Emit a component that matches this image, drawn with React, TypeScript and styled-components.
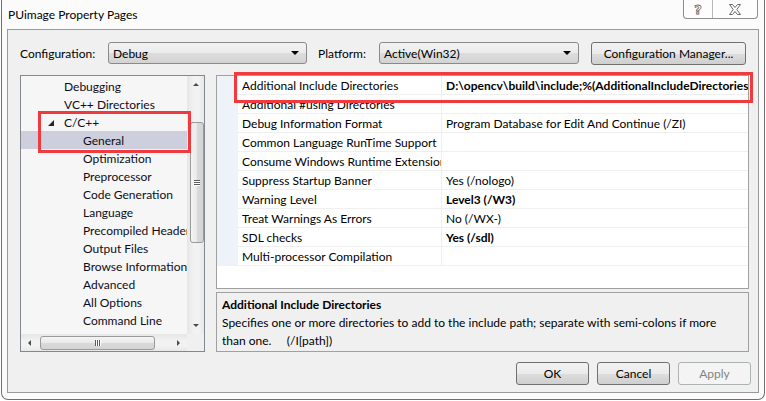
import React from 'react';
import styled, { createGlobalStyle } from 'styled-components';

const Global = createGlobalStyle`
  html, body { margin: 0; padding: 0; background: #ffffff; }
  body {
    width: 766px; height: 401px; overflow: hidden;
    font-family: "Segoe UI", Lato, "Open Sans", sans-serif;
    font-size: 12px; color: #000;
  }
  * { box-sizing: border-box; }
`;

const Stage = styled.div`
  position: relative;
  width: 766px;
  height: 401px;
  padding: 0 1px;
`;

const Frame = styled.div`
  height: 400px;
  background: #fbfbfb;
  border: 1px solid #6f6f6f;
  border-top: none;
  border-radius: 0 0 7px 7px;
  display: flex;
  flex-direction: column;
  padding: 0 5px 6px 5px;
`;

const TitleBar = styled.div`
  height: 29px;
  display: flex;
  align-items: center;
  padding: 0 0 0 1px;
  font-size: 12px;
  color: #000;
`;

const CaptionButtons = styled.div`
  position: absolute;
  top: 0;
  right: 8px;
  height: 19px;
  display: flex;
  border: 1px solid #8e8e8e;
  border-top: none;
  border-radius: 0 0 4px 4px;
  background: #fdfdfd;
`;

const CaptionButton = styled.div<{ $w: number; $sep?: boolean }>`
  width: ${p => p.$w}px;
  height: 100%;
  display: flex;
  align-items: center;
  justify-content: center;
  border-left: ${p => (p.$sep ? '1px solid #b8b8b8' : 'none')};
`;

const HelpGlyph = styled.span`
  font-family: "DejaVu Sans", sans-serif;
  font-size: 13px;
  font-weight: bold;
  color: #ffffff;
  -webkit-text-stroke: 0.8px #6a6a6a;
  line-height: 1;
`;

const Client = styled.div`
  flex: 1;
  border: 1px solid #9a9a9a;
  background: #f0f0f0;
  padding: 12px 8px 0 12px;
  display: flex;
  flex-direction: column;
`;

const ConfigRow = styled.div`
  display: flex;
  align-items: center;
  height: 22px;
`;

const Label = styled.span<{ $w: number; $ml?: number }>`
  width: ${p => p.$w}px;
  margin-left: ${p => p.$ml ?? 0}px;
  white-space: nowrap;
`;

const Combo = styled.div<{ $w: number }>`
  width: ${p => p.$w}px;
  height: 22px;
  border: 1px solid #8a8a8a;
  border-radius: 3px;
  background: linear-gradient(#f3f3f3 0%, #ebebeb 50%, #dddddd 51%, #d3d3d3 100%);
  display: flex;
  align-items: center;
  justify-content: space-between;
  padding: 0 7px 0 4px;
`;

const ComboArrow = styled.span`
  width: 0;
  height: 0;
  border-left: 4px solid transparent;
  border-right: 4px solid transparent;
  border-top: 4px solid #000;
`;

const PushButton = styled.div<{ $w: number; $ml?: number; $disabled?: boolean }>`
  width: ${p => p.$w}px;
  margin-left: ${p => p.$ml ?? 0}px;
  height: 23px;
  border: 1px solid ${p => (p.$disabled ? '#adb2b5' : '#707070')};
  border-radius: 3px;
  background: ${p =>
    p.$disabled
      ? '#f4f4f4'
      : 'linear-gradient(#f2f2f2 0%, #ebebeb 50%, #dddddd 51%, #cfcfcf 100%)'};
  color: ${p => (p.$disabled ? '#838383' : '#000')};
  display: flex;
  align-items: center;
  justify-content: center;
  white-space: nowrap;
`;

const Main = styled.div`
  margin-top: 11px;
  display: flex;
  gap: 11px;
  height: 277px;
`;

const Tree = styled.div`
  width: 185px;
  border: 1px solid #828790;
  background: #f6f6f6;
  display: grid;
  grid-template-columns: 1fr 17px;
  grid-template-rows: 1fr 17px;
`;

const TreeList = styled.div`
  overflow: hidden;
  padding-top: 1px;
`;

const TreeItem = styled.div<{ $level: number; $selected?: boolean }>`
  height: 18px;
  display: flex;
  align-items: center;
  padding-left: ${p => (p.$level === 0 ? 43 : 62)}px;
  background: ${p => (p.$selected ? '#cdd0dc' : 'transparent')};
  color: #0d0d1a;
  white-space: nowrap;
  position: relative;
`;

const Expander = styled.span`
  position: absolute;
  left: 27px;
  top: 7px;
  width: 0;
  height: 0;
  border-left: 6px solid transparent;
  border-bottom: 6px solid #262626;
`;

const VScroll = styled.div`
  background: linear-gradient(90deg, #e6e6e6, #f2f2f2 40%, #f2f2f2 70%, #e8e8e8);
  display: flex;
  flex-direction: column;
  align-items: center;
`;

const HScroll = styled.div`
  background: linear-gradient(#e6e6e6, #f2f2f2 40%, #f2f2f2 70%, #e8e8e8);
  display: flex;
  align-items: center;
`;

const Corner = styled.div`
  background: #f0f0f0;
`;

const ArrowBox = styled.div`
  width: 17px;
  height: 17px;
  display: flex;
  align-items: center;
  justify-content: center;
  flex: none;
`;

const Tri = styled.span<{ $dir: 'up' | 'down' | 'left' | 'right' }>`
  width: 0;
  height: 0;
  ${p =>
    p.$dir === 'up'
      ? 'border-left:3px solid transparent;border-right:3px solid transparent;border-bottom:3px solid #4a4a4a;'
      : p.$dir === 'down'
      ? 'border-left:3px solid transparent;border-right:3px solid transparent;border-top:3px solid #4a4a4a;'
      : p.$dir === 'left'
      ? 'border-top:3px solid transparent;border-bottom:3px solid transparent;border-right:3px solid #4a4a4a;'
      : 'border-top:3px solid transparent;border-bottom:3px solid transparent;border-left:3px solid #4a4a4a;'}
`;

const VThumb = styled.div`
  margin-top: 29px;
  width: 14px;
  height: 121px;
  margin-left: 2px;
  border: 1px solid #9a9a9a;
  border-radius: 3px;
  background: linear-gradient(90deg, #f4f4f4, #e9e9e9 50%, #d9d9d9 51%, #d4d4d4);
  display: flex;
  align-items: center;
  justify-content: center;
`;

const VSpacer = styled.div`
  flex: 1;
`;

const HThumb = styled.div`
  margin-left: 2px;
  width: 115px;
  height: 14px;
  border: 1px solid #9a9a9a;
  border-radius: 3px;
  background: linear-gradient(#f4f4f4, #e9e9e9 50%, #d9d9d9 51%, #d4d4d4);
  display: flex;
  align-items: center;
  justify-content: center;
`;

const Grip = styled.div<{ $vertical?: boolean }>`
  display: flex;
  flex-direction: ${p => (p.$vertical ? 'column' : 'row')};
  gap: 1px;
  & > span {
    display: block;
    background: #5a5a5a;
    width: ${p => (p.$vertical ? '6px' : '1px')};
    height: ${p => (p.$vertical ? '1px' : '6px')};
    box-shadow: ${p => (p.$vertical ? '0 1px 0 #fff' : '1px 0 0 #fff')};
  }
`;

const RightCol = styled.div`
  width: 533px;
  display: flex;
  flex-direction: column;
  gap: 3px;
`;

const Grid = styled.div`
  height: 214px;
  border: 1px solid #a0a0a0;
  background: #ffffff;
  overflow: hidden;
`;

const Row = styled.div`
  display: grid;
  grid-template-columns: 21px 204px 1fr;
  height: 19px;
`;

const Gutter = styled.div`
  background: #eef3fa;
`;

const Cell = styled.div<{ $bold?: boolean; $sep?: boolean }>`
  border-bottom: 1px solid #efefef;
  border-right: ${p => (p.$sep ? '1px solid #efefef' : 'none')};
  padding-left: 4px;
  display: flex;
  align-items: center;
  white-space: nowrap;
  overflow: hidden;
  font-weight: ${p => (p.$bold ? 'bold' : 'normal')};
  color: #000;
`;

const Description = styled.div`
  height: 60px;
  border: 1px solid #a0a0a0;
  background: #f0f0f0;
  padding: 3px 5px;
  line-height: 18px;
`;

const DescTitle = styled.div`
  font-weight: bold;
`;

const DescText = styled.div`
  white-space: pre-wrap;
`;

const ButtonRow = styled.div`
  margin-top: 10px;
  display: flex;
  justify-content: flex-end;
  gap: 8px;
  padding-right: 0;
  margin-right: -1px;
`;

const Highlight = styled.div<{ $x: number; $y: number; $w: number; $h: number }>`
  position: absolute;
  left: ${p => p.$x}px;
  top: ${p => p.$y}px;
  width: ${p => p.$w}px;
  height: ${p => p.$h}px;
  border: 3px solid #f03a3d;
  pointer-events: none;
`;

const treeItems: { label: string; level: number; selected?: boolean; expander?: boolean }[] = [
  { label: 'Debugging', level: 0 },
  { label: 'VC++ Directories', level: 0 },
  { label: 'C/C++', level: 0, expander: true },
  { label: 'General', level: 1, selected: true },
  { label: 'Optimization', level: 1 },
  { label: 'Preprocessor', level: 1 },
  { label: 'Code Generation', level: 1 },
  { label: 'Language', level: 1 },
  { label: 'Precompiled Headers', level: 1 },
  { label: 'Output Files', level: 1 },
  { label: 'Browse Information', level: 1 },
  { label: 'Advanced', level: 1 },
  { label: 'All Options', level: 1 },
  { label: 'Command Line', level: 1 },
];

const props: { name: string; value: string; bold?: boolean }[] = [
  { name: 'Additional Include Directories', value: 'D:\\opencv\\build\\include;%(AdditionalIncludeDirectories)', bold: true },
  { name: 'Additional #using Directories', value: '' },
  { name: 'Debug Information Format', value: 'Program Database for Edit And Continue (/ZI)' },
  { name: 'Common Language RunTime Support', value: '' },
  { name: 'Consume Windows Runtime Extension', value: '' },
  { name: 'Suppress Startup Banner', value: 'Yes (/nologo)' },
  { name: 'Warning Level', value: 'Level3 (/W3)', bold: true },
  { name: 'Treat Warnings As Errors', value: 'No (/WX-)' },
  { name: 'SDL checks', value: 'Yes (/sdl)', bold: true },
  { name: 'Multi-processor Compilation', value: '' },
];

export default function App() {
  return (
    <Stage>
      <Global />
      <Frame>
        <TitleBar>PUimage Property Pages</TitleBar>
        <Client>
          <ConfigRow>
            <Label $w={88}>Configuration:</Label>
            <Combo $w={199}>
              <span>Debug</span>
              <ComboArrow />
            </Combo>
            <Label $w={61} $ml={11}>Platform:</Label>
            <Combo $w={200}>
              <span>Active(Win32)</span>
              <ComboArrow />
            </Combo>
            <PushButton $w={155} $ml={12}>Configuration Manager...</PushButton>
          </ConfigRow>
          <Main>
            <Tree>
              <TreeList>
                {treeItems.map(it => (
                  <TreeItem key={it.label} $level={it.level} $selected={it.selected}>
                    {it.expander && <Expander />}
                    {it.label}
                  </TreeItem>
                ))}
              </TreeList>
              <VScroll>
                <ArrowBox><Tri $dir="up" /></ArrowBox>
                <VThumb>
                  <Grip $vertical>
                    <span /><span /><span />
                  </Grip>
                </VThumb>
                <VSpacer />
                <ArrowBox><Tri $dir="down" /></ArrowBox>
              </VScroll>
              <HScroll>
                <ArrowBox><Tri $dir="left" /></ArrowBox>
                <HThumb>
                  <Grip>
                    <span /><span /><span />
                  </Grip>
                </HThumb>
                <VSpacer />
                <ArrowBox><Tri $dir="right" /></ArrowBox>
              </HScroll>
              <Corner />
            </Tree>
            <RightCol>
              <Grid>
                {props.map(p => (
                  <Row key={p.name}>
                    <Gutter />
                    <Cell $sep>{p.name}</Cell>
                    <Cell $bold={p.bold}>{p.value}</Cell>
                  </Row>
                ))}
              </Grid>
              <Description>
                <DescTitle>Additional Include Directories</DescTitle>
                <DescText>{'Specifies one or more directories to add to the include path; separate with semi-colons if more\nthan one.     (/I[path])'}</DescText>
              </Description>
            </RightCol>
          </Main>
          <ButtonRow>
            <PushButton $w={73}>OK</PushButton>
            <PushButton $w={73}>Cancel</PushButton>
            <PushButton $w={73} $disabled>Apply</PushButton>
          </ButtonRow>
        </Client>
      </Frame>
      <CaptionButtons>
        <CaptionButton $w={28}><HelpGlyph>?</HelpGlyph></CaptionButton>
        <CaptionButton $w={45} $sep>
          <svg width="12" height="11" viewBox="0 0 12 11">
            <path d="M0.5 0.5 H3.5 L6 3.5 L8.5 0.5 H11.5 L7.8 5.5 L11.5 10.5 H8.5 L6 7.5 L3.5 10.5 H0.5 L4.2 5.5 Z" fill="#fff" stroke="#6a6a6a" strokeWidth="1" />
          </svg>
        </CaptionButton>
      </CaptionButtons>
      <Highlight $x={38} $y={111} $w={153} $h={42} />
      <Highlight $x={234} $y={72} $w={519} $h={31} />
    </Stage>
  );
}
